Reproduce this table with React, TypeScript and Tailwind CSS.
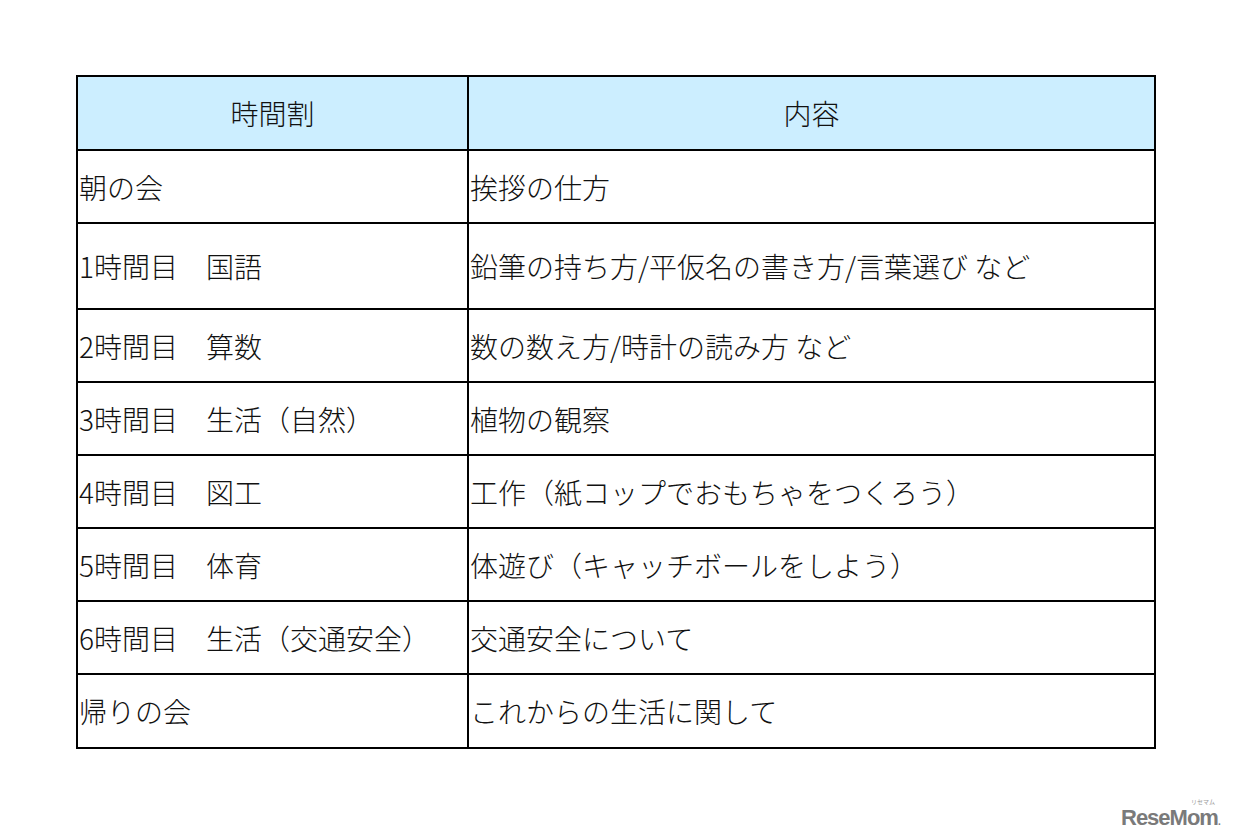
import React from "react";

const rows: [string, string, number][] = [
  ["朝の会", "挨拶の仕方", 73],
  ["1時間目　国語", "鉛筆の持ち方/平仮名の書き方/言葉選び など", 86],
  ["2時間目　算数", "数の数え方/時計の読み方 など", 73],
  ["3時間目　生活（自然）", "植物の観察", 73],
  ["4時間目　図工", "工作（紙コップでおもちゃをつくろう）", 73],
  ["5時間目　体育", "体遊び（キャッチボールをしよう）", 73],
  ["6時間目　生活（交通安全）", "交通安全について", 73],
  ["帰りの会", "これからの生活に関して", 74],
];

export default function App() {
  return (
    <div
      className="relative w-[1233px] h-[839px] bg-white text-[#111]"
      style={{ fontFamily: '"Noto Sans CJK JP", "Noto Sans", sans-serif' }}
    >
      <div className="pt-[75px] pl-[76px]">
        <table className="border-collapse w-[1080px] table-fixed">
          <colgroup>
            <col className="w-[391px]" />
            <col />
          </colgroup>
          <thead>
            <tr className="h-[74px] bg-[#cceeff]">
              <th className="border-2 border-black font-light text-[28px] text-center">時間割</th>
              <th className="border-2 border-black font-light text-[28px] text-center">内容</th>
            </tr>
          </thead>
          <tbody>
            {rows.map(([a, b, h], i) => (
              <tr key={i} style={{ height: h }}>
                <td className="border-2 border-black font-light text-[28px] pl-[1px] align-middle whitespace-nowrap">{a}</td>
                <td className="border-2 border-black font-light text-[28px] pl-[1px] align-middle whitespace-nowrap">{b}</td>
              </tr>
            ))}
          </tbody>
        </table>
      </div>
      <div className="absolute left-[1121px] top-[799px] w-[104px] leading-none">
        <div className="text-[6px] text-[#999] text-right pr-[10px] h-[6px]">リセマム</div>
        <div
          className="text-[22px] font-bold text-[#7a7a7a] tracking-[-1px] leading-[26px]"
          style={{ fontFamily: '"Liberation Sans", Arial, sans-serif' }}
        >
          ReseMom<span className="text-[10px]">.</span>
        </div>
      </div>
    </div>
  );
}
